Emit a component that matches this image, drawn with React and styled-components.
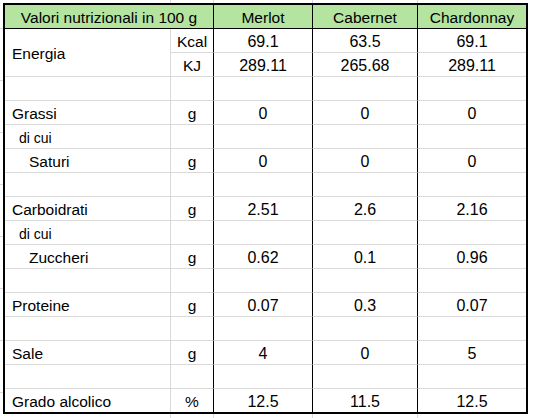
import React from 'react'
import styled, { createGlobalStyle } from 'styled-components'

const GlobalStyle = createGlobalStyle`
    html, body {
        margin: 0;
        padding: 0;
        background: #fff;
    }
    body {
        font-family: "Liberation Sans", Arial, sans-serif;
        color: #000;
    }
`

const GRID = '#d9d9d9'

const Sheet = styled.div`
    width: 533px;
    height: 418px;
    padding: 3px 0 0 3px;
    box-sizing: border-box;
    background:
        linear-gradient(${GRID}, ${GRID}) 170px 0 / 1px 100% no-repeat,
        linear-gradient(${GRID}, ${GRID}) 213px 0 / 1px 100% no-repeat,
        linear-gradient(${GRID}, ${GRID}) 312px 0 / 1px 100% no-repeat,
        linear-gradient(${GRID}, ${GRID}) 417px 0 / 1px 100% no-repeat,
        repeating-linear-gradient(to bottom, transparent 0 28px, ${GRID} 28px 29px, transparent 29px 52px) 0 0 / 3px 100% no-repeat;
    background-color: #fff;
`

const Table = styled.div`
    display: grid;
    grid-template-columns: 166px 43px 99px 105px 108px;
    grid-template-rows: repeat(16, 24px) 23px;
    width: max-content;
    border: 2px solid #000;
    background: #fff;
`

const Cell = styled.div`
    box-sizing: border-box;
    display: flex;
    align-items: center;
    justify-content: ${(p) => (p.$left ? 'flex-start' : 'center')};
    padding-left: ${(p) => p.$indent || 0}px;
    padding-top: 2px;
    font-size: ${(p) => p.$size || 15.5}px;
    white-space: nowrap;
    border-right: ${(p) => (p.$noRight ? 'none' : `1px solid ${p.$dark ? '#000' : GRID}`)};
    border-bottom: ${(p) => (p.$noBottom ? 'none' : `1px solid ${p.$darkBottom ? '#000' : GRID}`)};
    grid-column: ${(p) => p.$colSpan ? `span ${p.$colSpan}` : 'auto'};
    grid-row: ${(p) => p.$rowSpan ? `span ${p.$rowSpan}` : 'auto'};
`

const HeaderCell = styled(Cell)`
    background: #b4e4a0;
`

const wines = ['Merlot', 'Cabernet', 'Chardonnay']

const rows = [
    { label: 'Energia', span: 2, unit: 'Kcal', values: ['69.1', '63.5', '69.1'] },
    { skipLabel: true, unit: 'KJ', values: ['289.11', '265.68', '289.11'] },
    {},
    { label: 'Grassi', unit: 'g', values: ['0', '0', '0'] },
    { label: 'di cui', small: true },
    { label: 'Saturi', indent: 24, unit: 'g', values: ['0', '0', '0'] },
    {},
    { label: 'Carboidrati', unit: 'g', values: ['2.51', '2.6', '2.16'] },
    { label: 'di cui', small: true },
    { label: 'Zuccheri', indent: 24, unit: 'g', values: ['0.62', '0.1', '0.96'] },
    {},
    { label: 'Proteine', unit: 'g', values: ['0.07', '0.3', '0.07'] },
    {},
    { label: 'Sale', unit: 'g', values: ['4', '0', '5'] },
    {},
    { label: 'Grado alcolico', unit: '%', values: ['12.5', '11.5', '12.5'] },
]

const Row = ({ row, last }) => {
    const values = row.values || ['', '', '']
    return (
        <>
            {!row.skipLabel && (
                <Cell
                    $left
                    $indent={row.indent || (row.small ? 14 : 7)}
                    $size={row.small ? 14 : 15.5}
                    $rowSpan={row.span}
                    $noBottom={last}
                >
                    {row.label}
                </Cell>
            )}
            <Cell $dark $noBottom={last}>{row.unit}</Cell>
            {values.map((v, i) => (
                <Cell key={i} $size={16} $dark={i < 2} $noRight={i === 2} $noBottom={last}>{v}</Cell>
            ))}
        </>
    )
}

const App = () => {
    return (
        <Sheet>
            <GlobalStyle />
            <Table>
                <HeaderCell $colSpan={2} $dark $darkBottom>Valori nutrizionali in 100 g</HeaderCell>
                {wines.map((w, i) => (
                    <HeaderCell key={w} $dark={i < 2} $noRight={i === 2} $darkBottom>{w}</HeaderCell>
                ))}
                {rows.map((row, i) => (
                    <Row key={i} row={row} last={i === rows.length - 1} />
                ))}
            </Table>
        </Sheet>
    )
}

export default App
